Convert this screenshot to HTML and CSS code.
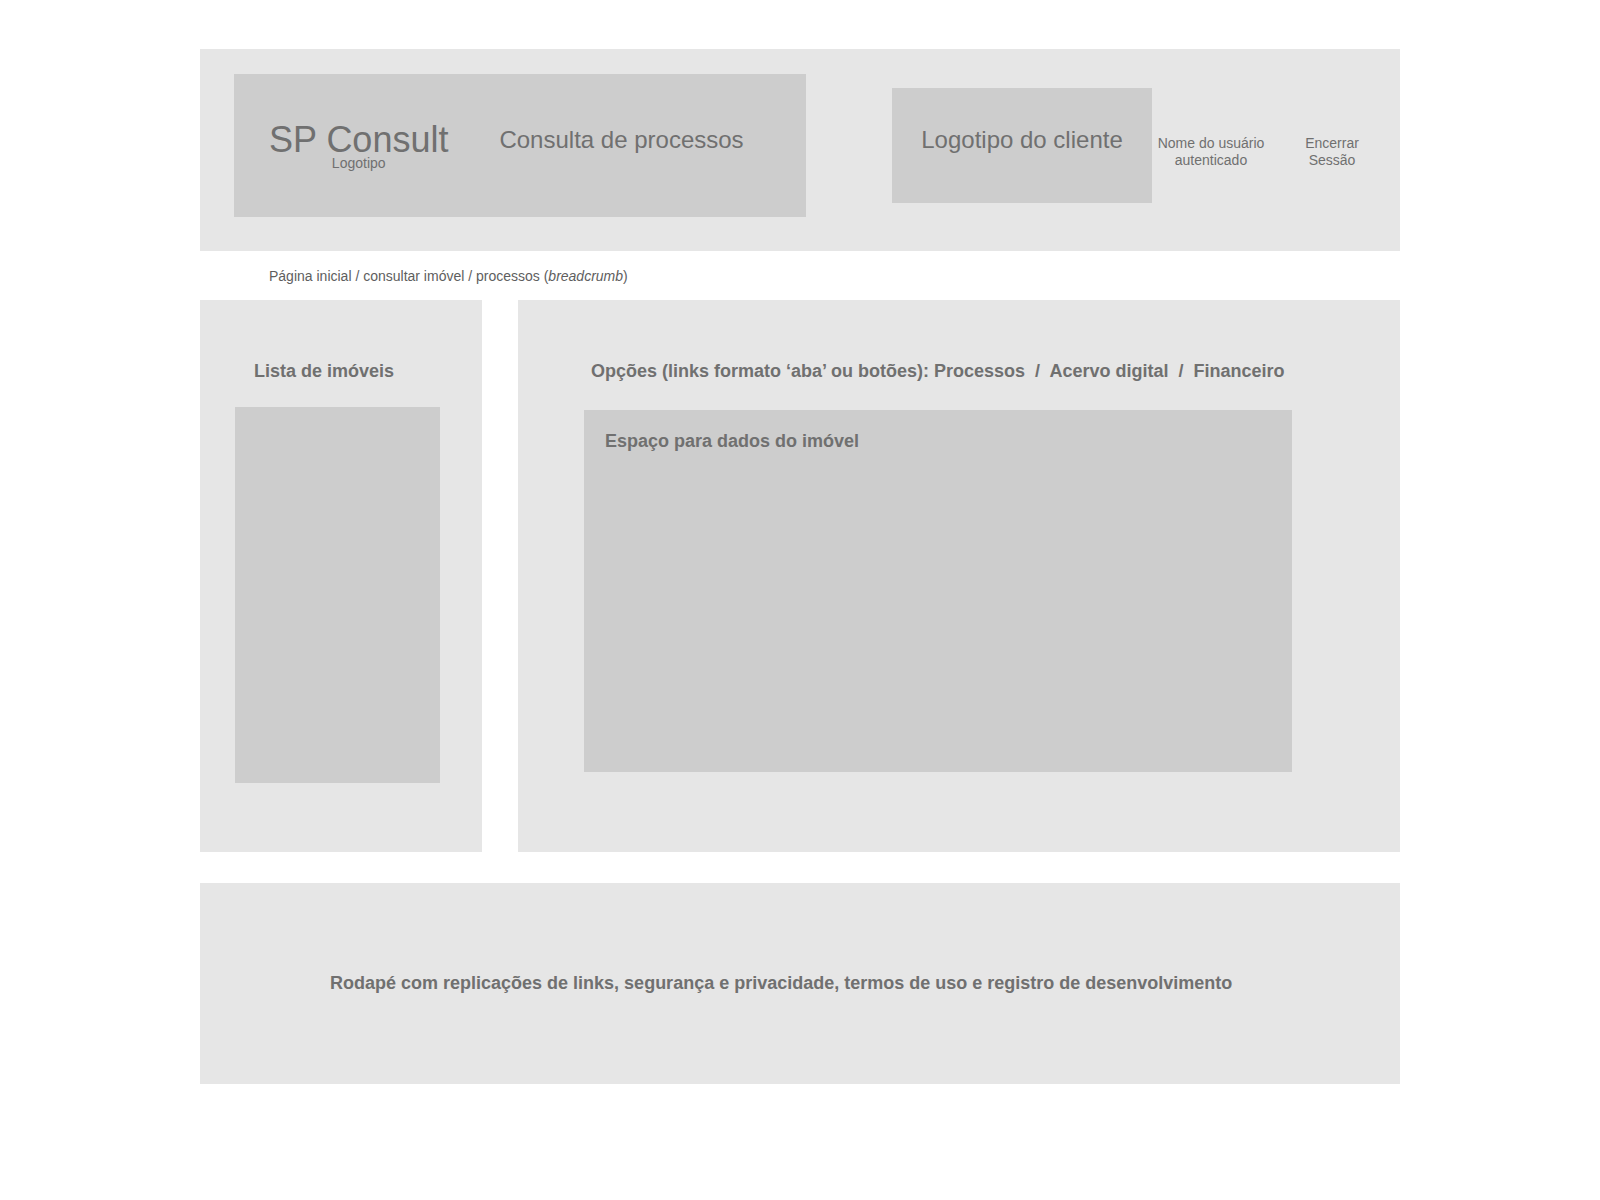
FILE: index.html
```html
<!DOCTYPE html>
<html lang="pt-BR">
<head>
    <meta charset="UTF-8">
    <meta name="viewport" content="width=device-width, initial-scale=1.0">
    <title>SP Consult - Consulta de processos</title>
    <link rel="stylesheet" href="styles.css">
</head>
<body>
    <div class="wrap">
        <div class="header">
            <div class="brand">
                <div class="logo">
                    <div class="logo-name">SP Consult</div>
                    <div class="logo-sub">Logotipo</div>
                </div>
                <div class="app-title">Consulta de processos</div>
            </div>
            <div class="client-logo">Logotipo do cliente</div>
            <div class="user">Nome do usuário<br>autenticado</div>
            <div class="logout">Encerrar<br>Sessão</div>
        </div>

        <div class="breadcrumb">Página inicial / consultar imóvel / processos (<i>breadcrumb</i>)</div>

        <div class="main">
            <div class="side">
                <h2 class="side-title">Lista de imóveis</h2>
                <div class="side-list"></div>
            </div>
            <div class="content">
                <h2 class="tabs">Opções (links formato ‘aba’ ou botões): Processos &nbsp;/&nbsp; Acervo digital &nbsp;/&nbsp; Financeiro</h2>
                <div class="data">
                    <h3 class="data-title">Espaço para dados do imóvel</h3>
                </div>
            </div>
        </div>

        <div class="footer">
            Rodapé com replicações de links, segurança e privacidade, termos de uso e registro de desenvolvimento
        </div>
    </div>
</body>
</html>
```

FILE: styles.css
```css
*{
    margin: 0;
    padding: 0;
    box-sizing: border-box;
}
body{
    background: #fff;
    font-family: "Liberation Sans", Arial, sans-serif;
    color: #707070;
}
.wrap{
    width: 1200px;
    margin: 0 auto;
    padding-top: 49px;
}
.header{
    display: flex;
    align-items: center;
    height: 202px;
    padding: 25px 0 34px 34px;
    background: #e6e6e6;
}
.brand{
    display: flex;
    align-items: center;
    width: 572px;
    height: 143px;
    padding: 0 0 10px 35px;
    background: #cdcdcd;
}
.logo{
    display: flex;
    flex-direction: column;
    align-items: center;
    margin-top: 10px;
}
.logo-name{
    font-size: 36px;
    line-height: 34px;
    margin-top: 2px;
}
.logo-sub{
    font-size: 14px;
    line-height: 14px;
    margin-top: -1px;
}
.app-title{
    margin-left: 51px;
    font-size: 24px;
    margin-bottom: 2px;
}
.client-logo{
    display: flex;
    align-items: center;
    justify-content: center;
    width: 260px;
    height: 115px;
    margin-left: 86px;
    padding-bottom: 12px;
    background: #cdcdcd;
    font-size: 24px;
}
.user,
.logout{
    font-size: 14px;
    line-height: 17px;
    text-align: center;
    margin-top: 12px;
}
.user{
    width: 118px;
}
.logout{
    width: 80px;
    margin-left: 22px;
}
.breadcrumb{
    padding: 17px 0 15px 69px;
    font-size: 14px;
    line-height: 17px;
    color: #5e5e5e;
}
.main{
    display: flex;
    gap: 36px;
    height: 552px;
}
.side{
    width: 282px;
    padding: 61px 0 0 35px;
    background: #e6e6e6;
}
.side-title,
.tabs{
    font-size: 18px;
    line-height: 21px;
    font-weight: bold;
}
.side-title{
    margin: 0 0 25px 19px;
}
.side-list{
    width: 205px;
    height: 376px;
    background: #cdcdcd;
}
.content{
    flex: 1;
    padding: 61px 0 0 66px;
    background: #e6e6e6;
}
.tabs{
    margin: 0 0 28px 7px;
}
.data{
    width: 708px;
    height: 362px;
    padding: 21px 21px;
    background: #cdcdcd;
}
.data-title{
    font-size: 18px;
    line-height: 21px;
    font-weight: bold;
}
.footer{
    display: flex;
    align-items: center;
    height: 201px;
    margin-top: 31px;
    padding-left: 130px;
    background: #e6e6e6;
    font-size: 18px;
    font-weight: bold;
}
```
